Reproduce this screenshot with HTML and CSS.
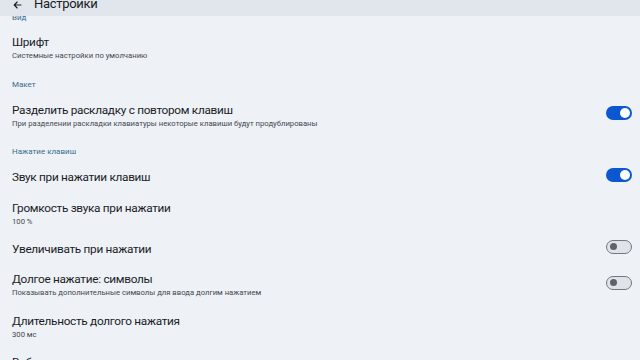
FILE: index.html
```html
<!DOCTYPE html>
<html lang="ru">
<head>
<meta charset="utf-8">
<title>Настройки</title>
<link rel="stylesheet" href="styles.css">
</head>
<body>
<div class="app">
  <header class="appbar">
    <div class="appbar-inner">
      <svg class="back" width="9" height="8" viewBox="0 0 9 8" aria-hidden="true">
        <path d="M8 4H1.2M4.2 1L1.2 4L4.2 7" fill="none" stroke="#1b1c1f" stroke-width="1.1" stroke-linecap="round" stroke-linejoin="round"/>
      </svg>
      <span class="appbar-title">Настройки</span>
    </div>
  </header>
  <main class="list">
    <div class="list-inner">
      <div class="category">Вид</div>
      <div class="pref">
        <div class="pref-text">
          <div class="title">Шрифт</div>
          <div class="summary">Системные настройки по умолчанию</div>
        </div>
      </div>

      <div class="category">Макет</div>
      <div class="pref">
        <div class="pref-text">
          <div class="title">Разделить раскладку с повтором клавиш</div>
          <div class="summary">При разделении раскладки клавиатуры некоторые клавиши будут продублированы</div>
        </div>
        <span class="switch on"><span class="knob"></span></span>
      </div>

      <div class="category">Нажатие клавиш</div>
      <div class="pref">
        <div class="pref-text">
          <div class="title">Звук при нажатии клавиш</div>
        </div>
        <span class="switch on"><span class="knob"></span></span>
      </div>
      <div class="pref">
        <div class="pref-text">
          <div class="title">Громкость звука при нажатии</div>
          <div class="summary">100 %</div>
        </div>
      </div>
      <div class="pref">
        <div class="pref-text">
          <div class="title">Увеличивать при нажатии</div>
        </div>
        <span class="switch off"><span class="knob"></span></span>
      </div>
      <div class="pref">
        <div class="pref-text">
          <div class="title">Долгое нажатие: символы</div>
          <div class="summary">Показывать дополнительные символы для ввода долгим нажатием</div>
        </div>
        <span class="switch off"><span class="knob"></span></span>
      </div>
      <div class="pref">
        <div class="pref-text">
          <div class="title">Длительность долгого нажатия</div>
          <div class="summary">300 мс</div>
        </div>
      </div>
      <div class="pref">
        <div class="pref-text">
          <div class="title">Вибрация при нажатии клавиш</div>
        </div>
      </div>
    </div>
  </main>
</div>
</body>
</html>
```

FILE: styles.css
```css
* { box-sizing: border-box; }
html, body {
  margin: 0;
  padding: 0;
  width: 640px;
  height: 360px;
  overflow: hidden;
  background: #eef2f7;
  font-family: Roboto, "Noto Sans", sans-serif;
  color: #1b1c1f;
}
.app {
  display: flex;
  flex-direction: column;
  height: 360px;
}
.appbar {
  flex: 0 0 16px;
  height: 16px;
  background: #e1e6ed;
  overflow: hidden;
}
.appbar-inner {
  display: flex;
  align-items: center;
  height: 20px;
  margin-top: -6px;
  padding-left: 13px;
}
.back {
  flex: 0 0 auto;
  margin-top: 2px;
  margin-right: 12px;
}
.appbar-title {
  font-size: 13px;
  letter-spacing: -0.3px;
  line-height: 20px;
  color: #1b1c1f;
}
.list {
  flex: 1 1 auto;
  overflow: hidden;
}
.list-inner {
  margin-top: -14.6px;
}
.category {
  padding: 11.1px 12px 6px;
  font-size: 8px;
  line-height: 9px;
  color: #3a6b8b;
}
.pref {
  display: flex;
  align-items: center;
  padding: 7.7px 8px 7.7px 12px;
}
.pref-text {
  flex: 1 1 auto;
  min-width: 0;
}
.title {
  font-size: 11.8px;
  letter-spacing: -0.3px;
  line-height: 15px;
  color: #1b1c1f;
}
.summary {
  font-size: 7.7px;
  line-height: 11px;
  color: #44474e;
}
.switch {
  flex: 0 0 auto;
  position: relative;
  width: 26px;
  height: 14px;
  border-radius: 7px;
  margin-top: -2.5px;
  margin-bottom: 2.5px;
}
.switch .knob {
  position: absolute;
  border-radius: 50%;
  top: 50%;
}
.switch.on {
  background: #0b57d0;
}
.switch.on .knob {
  width: 10px;
  height: 10px;
  right: 2px;
  margin-top: -5px;
  background: #ffffff;
}
.switch.off {
  background: #e1e3ea;
  border: 1.3px solid #74777f;
}
.switch.off .knob {
  width: 7px;
  height: 7px;
  left: 3px;
  margin-top: -3.5px;
  background: #5f6268;
}
```
